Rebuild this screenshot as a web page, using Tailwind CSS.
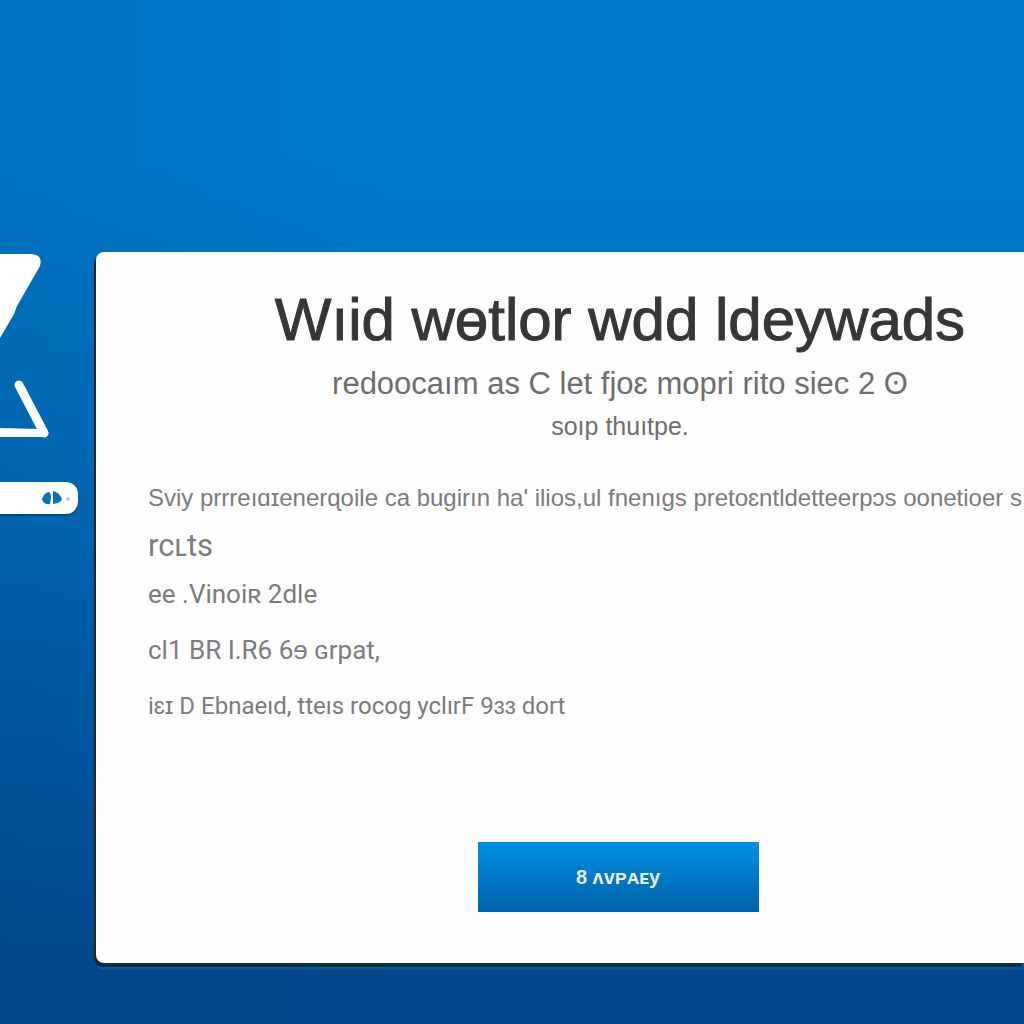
<!DOCTYPE html>
<html lang="en">
<head>
  <meta charset="UTF-8" />
  <meta name="viewport" content="width=device-width, initial-scale=1.0"/>
  <title>Wıid wɵtlor wdd ldeywads</title>
  <script src="https://cdn.jsdelivr.net/npm/@tailwindcss/browser@4"></script>
</head>

<body class="min-h-screen overflow-x-hidden bg-linear-to-b from-[#007bcb] from-15% via-[#0069b6] via-50% to-[#00488e] to-95% font-['Liberation_Sans',sans-serif]">

<div class="flex min-h-screen items-start bg-linear-to-r from-[#003058]/10 to-transparent to-40% pt-[252px] pb-14">

  <!-- Side strip -->
  <aside class="w-24 shrink-0">
    <svg class="block w-24" viewBox="0 0 96 230" fill="none" aria-hidden="true">
      <path d="M0 2H32Q43 3 40 14L17 54L14 62L0 86Z" fill="#fff"/>
      <path d="M19 133L44 181" stroke="#fff" stroke-width="9" stroke-linecap="round"/>
      <path d="M0 176L40 177L49 181L46 185H0Z" fill="#fff"/>
    </svg>
    <button type="button" aria-label="Options" class="flex h-8 w-[78px] items-center justify-end rounded-r-xl bg-white pr-2 shadow-[0_2px_1px_#004a86]">
      <svg class="h-4 w-7" viewBox="0 0 28 16" aria-hidden="true">
        <path d="M7 2Q9 3 9 8L8 14Q1 15 0 9Q2 3 7 2Z" fill="#0b72b8"/>
        <path d="M11 1Q17 2 20 9Q19 13 11 14Z" fill="#0b72b8"/>
        <circle cx="26" cy="9" r="2" fill="#c9c9c9"/>
      </svg>
    </button>
  </aside>

  <!-- Card -->
  <main class="min-w-0 flex-1 overflow-hidden rounded-l-lg bg-[#fdfdfd] pt-8 pb-[51px] shadow-[-2px_4px_0_#1d2932,-1px_6px_2px_#0562a4]">
    <header class="pl-[120px] text-center text-[#6e6e6e]">
      <h1 class="whitespace-nowrap text-[60px] leading-[72px] text-[#363636] [-webkit-text-stroke:1px_#363636]">Wıid wɵtlor wdd ldeywads</h1>
      <p class="whitespace-nowrap text-[31px] leading-14">redoocaım as C let fjoɛ mopri rito siec 2 ʘ</p>
      <p class="whitespace-nowrap text-[25px] leading-7">soıp thuıtpe.</p>
    </header>

    <section class="mt-[34px] pl-[52px] text-[#7c7c7c]">
      <p class="whitespace-nowrap text-2xl leading-12">Sviy prrreıɑɪenerɋoile ca bugirın ha' ilios,ul fnenıgs pretoɛntldetteerpɔs oonetioer s</p>
      <ul class="whitespace-nowrap font-[Roboto,'Liberation_Sans',sans-serif]">
        <li class="text-[31px] leading-12">rcʟts</li>
        <li class="text-[26px] leading-12">ee .Vinoiʀ 2dle</li>
        <li class="text-[26px] leading-16">cl1 BR I.R6 6ɘ ɢrpat,</li>
        <li class="text-2xl leading-12">iɛɪ D Ebnaeıd, tteıs rocog yclırF 9ɜɜ dort</li>
      </ul>
    </section>

    <div class="mt-28 pl-[116px] text-center">
      <button type="button" class="h-[70px] w-[281px] bg-linear-to-b from-[#0090e2] to-[#0062aa] text-xl font-bold text-[#e9eef0]">8 ʌᴠᴘᴀᴇy</button>
    </div>
  </main>

</div>

</body>
</html>
